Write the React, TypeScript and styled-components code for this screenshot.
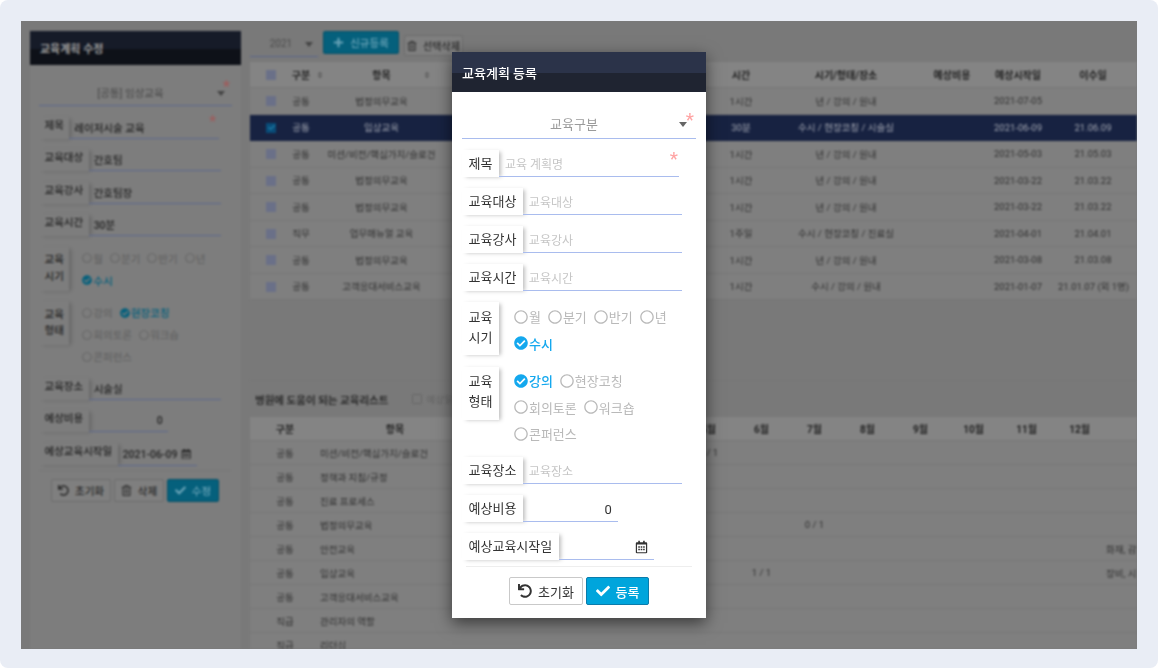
import React from 'react'
import styled, { ThemeProvider, createGlobalStyle } from 'styled-components'
import {
    FaCheck,
    FaCheckCircle,
    FaPlus,
    FaRegCalendarAlt,
    FaRegCircle,
    FaRegTrashAlt,
    FaSort,
    FaUndo,
} from 'react-icons/fa'

const modalTheme = {
    font: 13,
    placeholderFont: 12,
    weight: 400,
    text: '#333333',
    muted: '#9a9a9a',
    caret: '#666666',
    placeholder: '#c6c6c6',
    radioOff: '#b9b9b9',
    radioOn: '#14a8ee',
    line: '#a9bcee',
    star: '#ffa3a3',
    surface: '#ffffff',
    labelShadow: 'rgba(0, 0, 0, 0.25)',
    divider: '#eeeeee',
    headerTop: '#2b3349',
    headerBottom: '#1f2431',
    headerText: '#ffffff',
    headerFont: 13,
    headerWeight: 500,
    headerHeight: 40,
    formPadding: '18px 10px 0',
    selectHeight: 28,
    selectWidth: 234,
    caretRight: 9,
    selectStarTop: 0,
    selectStarRight: 2,
    titleStarTop: -1,
    titleStarRight: 18,
    rowHeight: 27,
    rowGap: 11.1,
    labelPad: 6.5,
    labelTop: 1,
    labelBottom: 0,
    groupLabelBottom: 2,
    wTitle: 180,
    wField: 159,
    wShort: 95,
    inputPad: 6,
    inputTop: 3,
    radioRow: 26.5,
    radioTop: 2,
    radioIcon: 14,
    radioGap: 7,
    groupPad: 15,
    groupWidth: 170,
    iconRight: 6,
    footerTop: 6,
    footerInset: 4,
    buttonsTop: 10,
    buttonHeight: 28,
    buttonGap: 3,
    buttonFont: 13,
    buttonIcon: 14,
    btnBg: '#ffffff',
    btnBorder: '#c9c9c9',
    btnText: '#333333',
    primaryBg: '#00a5dc',
    primaryBorder: '#0b7cab',
    primaryText: '#ffffff',
}

const dimTheme = {
    ...modalTheme,
    font: 10.5,
    placeholderFont: 10.5,
    weight: 500,
    text: '#242424',
    muted: '#505050',
    caret: '#444444',
    placeholder: '#555555',
    radioOff: '#646464',
    radioOn: '#05607c',
    line: '#5b678c',
    star: '#a05a5a',
    surface: '#7d7d7d',
    labelShadow: 'rgba(0, 0, 0, 0.2)',
    divider: '#777777',
    headerTop: '#161b28',
    headerBottom: '#0e1118',
    headerText: '#9a9a9a',
    headerFont: 11,
    headerWeight: 700,
    headerHeight: 34,
    formPadding: '15px 10px 0 9px',
    selectHeight: 25,
    selectWidth: 193,
    caretRight: 7,
    selectStarTop: -1,
    selectStarRight: 2,
    titleStarTop: -3,
    titleStarRight: 15,
    rowHeight: 22,
    rowGap: 10.5,
    labelPad: 5.5,
    labelTop: 0,
    labelBottom: 3,
    groupLabelBottom: 0,
    wTitle: 150,
    wField: 132,
    wShort: 79,
    inputPad: 5,
    inputTop: 0,
    radioRow: 22,
    radioTop: 1,
    radioIcon: 10,
    radioGap: 7,
    groupPad: 13,
    groupWidth: 130,
    iconRight: 5,
    footerTop: 5,
    footerInset: 0,
    buttonsTop: 8,
    buttonHeight: 23,
    buttonGap: 3,
    buttonFont: 10.5,
    buttonIcon: 11,
    btnBg: '#7f7f7f',
    btnBorder: '#6c6c6c',
    btnText: '#2c2c2c',
    primaryBg: '#05607c',
    primaryBorder: '#044f67',
    primaryText: '#6aa4b8',
}

const GlobalStyle = createGlobalStyle`
    html, body {
        margin: 0;
        padding: 0;
        background: #ffffff;
        font-family: Roboto, "Noto Sans CJK KR", "Noto Sans", sans-serif;
    }
`

const Page = styled.div`
    width: 1158px;
    height: 668px;
    padding: 21px;
    box-sizing: border-box;
    background: #e9edf5;
    border-radius: 8px;
    overflow: hidden;
`

const Frame = styled.div`
    position: relative;
    width: 1116px;
    height: 628px;
    overflow: hidden;
    background: #797979;
`

const Dimmed = styled.div`
    display: flex;
    gap: 9px;
    height: 100%;
    padding: 10px 0 0 9px;
    box-sizing: border-box;
    filter: blur(0.8px);
`

const SidePanel = styled.aside`
    flex: none;
    width: 211px;
    background: #7d7d7d;
`

const PanelHeader = styled.div`
    display: flex;
    align-items: center;
    height: ${p => p.theme.headerHeight}px;
    padding-left: 10px;
    box-sizing: border-box;
    background: linear-gradient(${p => p.theme.headerTop} 52%, ${p => p.theme.headerBottom} 52%);
    color: ${p => p.theme.headerText};
    font-size: ${p => p.theme.headerFont}px;
    font-weight: ${p => p.theme.headerWeight};
`

const Content = styled.main`
    flex: none;
    width: 887px;
    overflow: hidden;
`

const Toolbar = styled.div`
    display: flex;
    align-items: flex-start;
    gap: 5px;
    height: 31px;
`

const YearSelect = styled.div`
    position: relative;
    width: 68px;
    height: 26px;
    padding-right: 6px;
    box-sizing: border-box;
    border-bottom: 1px solid #5b678c;
    color: #4c4c4c;
    font-size: 10px;
    line-height: 25px;
    text-align: center;
`

const Caret = styled.i<{ $right?: number }>`
    position: absolute;
    top: 50%;
    right: ${p => p.$right ?? p.theme.caretRight}px;
    margin-top: -2px;
    border: 4px solid transparent;
    border-top: 5px solid ${p => p.theme.caret};
    border-bottom: 0;
`

const ActionButton = styled.button<{ $width: number; $small?: boolean; $primary?: boolean }>`
    display: inline-flex;
    flex: none;
    align-items: center;
    justify-content: center;
    gap: 6px;
    width: ${p => p.$width}px;
    height: ${p => (p.$small ? 21 : p.theme.buttonHeight)}px;
    margin-top: ${p => (p.$small ? 4 : 0)}px;
    padding: 0;
    border: 1px solid ${p => (p.$primary ? p.theme.primaryBorder : p.theme.btnBorder)};
    border-radius: 2px;
    background: ${p => (p.$primary ? p.theme.primaryBg : p.theme.btnBg)};
    color: ${p => (p.$primary ? p.theme.primaryText : p.theme.btnText)};
    font-family: inherit;
    font-size: ${p => (p.$small ? 10 : p.theme.buttonFont)}px;
    font-weight: ${p => (p.$primary ? 500 : p.theme.weight)};

    svg {
        width: ${p => (p.$small ? 10 : p.theme.buttonIcon)}px;
        height: ${p => (p.$small ? 10 : p.theme.buttonIcon)}px;
    }
`

const topColumns = '36px 30px 131px 269px 50px 160px 52px 80px 70px 9px'
const bottomColumns = '70px 150px 212px repeat(8, 53px) 31px'

const Row = styled.div<{ $cols: string; $height: number; $head?: boolean; $selected?: boolean }>`
    display: grid;
    grid-template-columns: ${p => p.$cols};
    align-items: center;
    height: ${p => p.$height}px;
    box-sizing: border-box;
    border-bottom: 1px solid ${p => (p.$selected ? '#172241' : '#777777')};
    background: ${p => (p.$selected ? '#172241' : p.$head ? '#848484' : '#7f7f7f')};
    color: ${p => (p.$selected ? '#a3a7b2' : p.$head ? '#222222' : '#303030')};
    font-size: ${p => (p.$head ? 10 : 9.5)}px;
    font-weight: ${p => (p.$head ? 700 : 400)};
`

const Cell = styled.span<{ $left?: boolean }>`
    position: relative;
    text-align: ${p => (p.$left ? 'left' : 'center')};
    white-space: nowrap;
    overflow: ${p => (p.$left ? 'hidden' : 'visible')};
`

const SortMark = styled.span<{ $right: number }>`
    position: absolute;
    top: 4px;
    right: ${p => p.$right}px;
    color: #5f5f5f;
    font-size: 8px;
`

const TickBox = styled.span<{ $on?: boolean }>`
    display: inline-flex;
    align-items: center;
    justify-content: center;
    width: 10px;
    height: 10px;
    margin-left: 6px;
    background: ${p => (p.$on ? '#094c78' : '#6a7088')};
    color: #1f7aa4;
    font-size: 7px;
    vertical-align: middle;
`

const BottomSection = styled.section`
    margin-top: 80px;
    border-top: 1px solid #777777;
`

const SectionHead = styled.div`
    display: flex;
    align-items: center;
    height: 36px;
    padding-left: 5px;
    color: #2a2a2a;
    font-size: 10.5px;
    font-weight: 700;
`

const OutlineBox = styled.span`
    flex: none;
    width: 8px;
    height: 8px;
    margin: 0 4px 0 24px;
    border: 1px solid #676767;
    border-radius: 1px;
`

const SectionNote = styled.span`
    color: #646464;
    font-size: 9.5px;
    font-weight: 400;
`

const Modal = styled.div`
    position: absolute;
    top: 31px;
    left: 431px;
    width: 254px;
    height: 566px;
    background: #ffffff;
    box-shadow: 0 5px 15px rgba(0, 0, 0, 0.55);
    filter: blur(0.35px);
`

const FormBody = styled.form`
    padding: ${p => p.theme.formPadding};
`

const Fields = styled.div`
    display: flex;
    flex-direction: column;
    gap: ${p => p.theme.rowGap}px;
`

const SelectBox = styled.div`
    position: relative;
    flex: none;
    width: ${p => p.theme.selectWidth}px;
    height: ${p => p.theme.selectHeight + 1}px;
    padding: 2px 10px 0 0;
    box-sizing: border-box;
    border-bottom: 1px solid ${p => p.theme.line};
    color: ${p => p.theme.muted};
    font-size: ${p => p.theme.font}px;
    font-weight: ${p => p.theme.weight};
    line-height: ${p => p.theme.selectHeight - 2}px;
    text-align: center;
`

const SelectStar = styled.span`
    position: absolute;
    top: ${p => p.theme.selectStarTop}px;
    right: ${p => p.theme.selectStarRight}px;
    color: ${p => p.theme.star};
    font-size: ${p => p.theme.font + 6}px;
    line-height: 1;
`

const TitleStar = styled(SelectStar)`
    top: ${p => p.theme.titleStarTop}px;
    right: ${p => p.theme.titleStarRight}px;
`

const Field = styled.div`
    position: relative;
    display: flex;
    height: ${p => p.theme.rowHeight}px;
`

const FieldGroup = styled.div`
    display: flex;
    align-items: flex-start;
`

const FieldLabel = styled.label<{ $rows?: number }>`
    flex: none;
    display: flex;
    align-items: center;
    height: ${p => (p.$rows ? p.$rows * p.theme.radioRow : p.theme.rowHeight)}px;
    padding: ${p => (p.$rows ? 0 : p.theme.labelTop)}px ${p => p.theme.labelPad}px
        ${p => (p.$rows ? p.theme.groupLabelBottom : p.theme.labelBottom)}px;
    box-sizing: border-box;
    background: ${p => p.theme.surface};
    box-shadow: 3px 1px 4px -1px ${p => p.theme.labelShadow};
    color: ${p => p.theme.text};
    font-size: ${p => p.theme.font}px;
    font-weight: ${p => p.theme.weight};
    line-height: 1.55;
    white-space: pre-line;
`

const TextInput = styled.input<{ $size?: 'title' | 'short'; $right?: boolean }>`
    flex: none;
    width: ${p => (p.$size === 'title' ? p.theme.wTitle : p.$size === 'short' ? p.theme.wShort : p.theme.wField)}px;
    height: 100%;
    padding: ${p => p.theme.inputTop}px ${p => p.theme.inputPad}px 0;
    box-sizing: border-box;
    border: 0;
    border-bottom: 1px solid ${p => p.theme.line};
    outline: 0;
    background: transparent;
    color: ${p => p.theme.text};
    font-family: inherit;
    font-size: ${p => p.theme.font}px;
    font-weight: ${p => p.theme.weight};
    text-align: ${p => (p.$right ? 'right' : 'left')};

    &::placeholder {
        color: ${p => p.theme.placeholder};
        font-size: ${p => p.theme.placeholderFont}px;
    }
`

const DateSlot = styled.div`
    position: relative;
    flex: none;
`

const DateIcon = styled.span`
    position: absolute;
    top: 50%;
    right: ${p => p.theme.iconRight}px;
    display: flex;
    transform: translateY(-50%);
    color: ${p => p.theme.text};
    font-size: ${p => p.theme.font}px;
`

const RadioGroup = styled.div`
    display: flex;
    flex-wrap: wrap;
    column-gap: ${p => p.theme.radioGap}px;
    width: ${p => p.theme.groupWidth}px;
    margin-left: ${p => p.theme.groupPad}px;
`

const RadioItem = styled.span<{ $on?: boolean }>`
    display: inline-flex;
    align-items: center;
    gap: 1px;
    height: ${p => p.theme.radioRow}px;
    padding-top: ${p => p.theme.radioTop}px;
    box-sizing: border-box;
    color: ${p => (p.$on ? p.theme.radioOn : p.theme.radioOff)};
    font-size: ${p => p.theme.font}px;
    font-weight: ${p => (p.$on ? 500 : p.theme.weight)};

    svg {
        width: ${p => p.theme.radioIcon}px;
        height: ${p => p.theme.radioIcon}px;
    }
`

const Footer = styled.div`
    margin: ${p => p.theme.footerTop}px ${p => p.theme.footerInset}px 0;
    padding-top: ${p => p.theme.buttonsTop}px;
    border-top: 1px solid ${p => p.theme.divider};
`

const ButtonBar = styled.div`
    display: flex;
    justify-content: center;
    gap: ${p => p.theme.buttonGap}px;
`

interface FormValues {
    kind: string
    title?: string
    target?: string
    teacher?: string
    hours?: string
    place?: string
    date?: string
    period: string
    style: string
}

interface FormProps {
    values: FormValues
    children: React.ReactNode
}

const PERIODS = ['월', '분기', '반기', '년', '수시']
const STYLES = ['강의', '현장코칭', '회의토론', '워크숍', '콘퍼런스']

const Radios = ({ options, value }: { options: string[]; value: string }) => (
    <RadioGroup>
        {options.map(option => (
            <RadioItem key={option} $on={option === value}>
                {option === value ? <FaCheckCircle /> : <FaRegCircle />}
                {option}
            </RadioItem>
        ))}
    </RadioGroup>
)

const EducationForm = ({ values, children }: FormProps) => {
    const textRows = [
        { label: '교육대상', value: values.target },
        { label: '교육강사', value: values.teacher },
        { label: '교육시간', value: values.hours },
    ]

    return (
        <FormBody>
            <Fields>
                <SelectBox>
                    {values.kind}
                    <Caret />
                    <SelectStar>*</SelectStar>
                </SelectBox>
                <Field>
                    <FieldLabel>제목</FieldLabel>
                    <TextInput $size="title" readOnly value={values.title ?? ''} placeholder="교육 계획명" />
                    <TitleStar>*</TitleStar>
                </Field>
                {textRows.map(row => (
                    <Field key={row.label}>
                        <FieldLabel>{row.label}</FieldLabel>
                        <TextInput readOnly value={row.value ?? ''} placeholder={row.label} />
                    </Field>
                ))}
                <FieldGroup>
                    <FieldLabel $rows={2}>{'교육\n시기'}</FieldLabel>
                    <Radios options={PERIODS} value={values.period} />
                </FieldGroup>
                <FieldGroup>
                    <FieldLabel $rows={2}>{'교육\n형태'}</FieldLabel>
                    <Radios options={STYLES} value={values.style} />
                </FieldGroup>
                <Field>
                    <FieldLabel>교육장소</FieldLabel>
                    <TextInput readOnly value={values.place ?? ''} placeholder="교육장소" />
                </Field>
                <Field>
                    <FieldLabel>예상비용</FieldLabel>
                    <TextInput $size="short" $right readOnly value="0" />
                </Field>
                <Field>
                    <FieldLabel>예상교육시작일</FieldLabel>
                    <DateSlot>
                        <TextInput $size="short" readOnly value={values.date ?? ''} />
                        <DateIcon><FaRegCalendarAlt /></DateIcon>
                    </DateSlot>
                </Field>
            </Fields>
            <Footer>
                <ButtonBar>{children}</ButtonBar>
            </Footer>
        </FormBody>
    )
}

const topRows = [
    { group: '공통', name: '법정의무교육', hours: '1시간', plan: '년 / 강의 / 원내', start: '2021-07-05', done: '' },
    { group: '공통', name: '임상교육', hours: '30분', plan: '수시 / 현장코칭 / 시술실', start: '2021-06-09', done: '21.06.09', selected: true },
    { group: '공통', name: '미션/비전/핵심가치/슬로건', hours: '1시간', plan: '년 / 강의 / 원내', start: '2021-05-03', done: '21.05.03' },
    { group: '공통', name: '법정의무교육', hours: '1시간', plan: '년 / 강의 / 원내', start: '2021-03-22', done: '21.03.22' },
    { group: '공통', name: '법정의무교육', hours: '1시간', plan: '년 / 강의 / 원내', start: '2021-03-22', done: '21.03.22' },
    { group: '직무', name: '업무매뉴얼 교육', hours: '1주일', plan: '수시 / 현장코칭 / 진료실', start: '2021-04-01', done: '21.04.01' },
    { group: '공통', name: '법정의무교육', hours: '1시간', plan: '년 / 강의 / 원내', start: '2021-03-08', done: '21.03.08' },
    { group: '공통', name: '고객응대서비스교육', hours: '1시간', plan: '수시 / 강의 / 원내', start: '2021-01-07', done: '21.01.07 (외 1명)' },
]

const bottomRows: { group: string; name: string; month?: number; count?: string; note?: string }[] = [
    { group: '공통', name: '미션/비전/핵심가치/슬로건', month: 5, count: '1 / 1' },
    { group: '공통', name: '정책과 지침/규정' },
    { group: '공통', name: '진료 프로세스' },
    { group: '공통', name: '법정의무교육', month: 7, count: '0 / 1' },
    { group: '공통', name: '안전교육', note: '화재, 감염' },
    { group: '공통', name: '임상교육', month: 6, count: '1 / 1', note: '장비, 시설' },
    { group: '공통', name: '고객응대서비스교육' },
    { group: '직급', name: '관리자의 역할' },
    { group: '직급', name: '리더십' },
]

// months 1-4 sit behind the modal, only 5-12 get their own column
const MONTHS = [5, 6, 7, 8, 9, 10, 11, 12]

const App = () => {
    return (
        <Page>
            <GlobalStyle />
            <Frame>
                <ThemeProvider theme={dimTheme}>
                    <Dimmed>
                        <SidePanel>
                            <PanelHeader>교육계획 수정</PanelHeader>
                            <EducationForm
                                values={{
                                    kind: '[공통] 임상교육',
                                    title: '레이저시술 교육',
                                    target: '간호팀',
                                    teacher: '간호팀장',
                                    hours: '30분',
                                    place: '시술실',
                                    date: '2021-06-09',
                                    period: '수시',
                                    style: '현장코칭',
                                }}
                            >
                                <ActionButton type="button" $width={60}><FaUndo />초기화</ActionButton>
                                <ActionButton type="button" $width={50}><FaRegTrashAlt />삭제</ActionButton>
                                <ActionButton type="button" $width={52} $primary><FaCheck />수정</ActionButton>
                            </EducationForm>
                        </SidePanel>
                        <Content>
                            <Toolbar>
                                <YearSelect>
                                    2021
                                    <Caret $right={5} />
                                </YearSelect>
                                <ActionButton type="button" $width={76} $primary><FaPlus />신규등록</ActionButton>
                                <ActionButton type="button" $width={59} $small><FaRegTrashAlt />선택삭제</ActionButton>
                            </Toolbar>
                            <Row $cols={topColumns} $height={26} $head>
                                <Cell><TickBox /></Cell>
                                <Cell>구분<SortMark $right={-8}><FaSort /></SortMark></Cell>
                                <Cell>항목<SortMark $right={16}><FaSort /></SortMark></Cell>
                                <Cell />
                                <Cell>시간</Cell>
                                <Cell>시기/형태/장소</Cell>
                                <Cell>예상비용</Cell>
                                <Cell>예상시작일</Cell>
                                <Cell>이수일</Cell>
                            </Row>
                            {topRows.map((row, i) => (
                                <Row key={i} $cols={topColumns} $height={26.5} $selected={row.selected}>
                                    <Cell><TickBox $on={row.selected}>{row.selected && <FaCheck />}</TickBox></Cell>
                                    <Cell>{row.group}</Cell>
                                    <Cell>{row.name}</Cell>
                                    <Cell />
                                    <Cell>{row.hours}</Cell>
                                    <Cell>{row.plan}</Cell>
                                    <Cell />
                                    <Cell>{row.start}</Cell>
                                    <Cell>{row.done}</Cell>
                                </Row>
                            ))}
                            <BottomSection>
                                <SectionHead>
                                    병원에 도움이 되는 교육리스트
                                    <OutlineBox />
                                    <SectionNote>예상일</SectionNote>
                                </SectionHead>
                                <Row $cols={bottomColumns} $height={24} $head>
                                    <Cell>구분</Cell>
                                    <Cell>항목</Cell>
                                    <Cell />
                                    {MONTHS.map(m => <Cell key={m}>{m}월</Cell>)}
                                </Row>
                                {bottomRows.map(row => (
                                    <Row key={row.name} $cols={bottomColumns} $height={24}>
                                        <Cell>{row.group}</Cell>
                                        <Cell $left>{row.name}</Cell>
                                        <Cell />
                                        {MONTHS.map(m => <Cell key={m}>{row.month === m ? row.count : ''}</Cell>)}
                                        <Cell $left>{row.note}</Cell>
                                    </Row>
                                ))}
                            </BottomSection>
                        </Content>
                    </Dimmed>
                </ThemeProvider>
                <ThemeProvider theme={modalTheme}>
                    <Modal>
                        <PanelHeader>교육계획 등록</PanelHeader>
                        <EducationForm values={{ kind: '교육구분', period: '수시', style: '강의' }}>
                            <ActionButton type="button" $width={74}><FaUndo />초기화</ActionButton>
                            <ActionButton type="button" $width={63} $primary><FaCheck />등록</ActionButton>
                        </EducationForm>
                    </Modal>
                </ThemeProvider>
            </Frame>
        </Page>
    )
}

export default App
